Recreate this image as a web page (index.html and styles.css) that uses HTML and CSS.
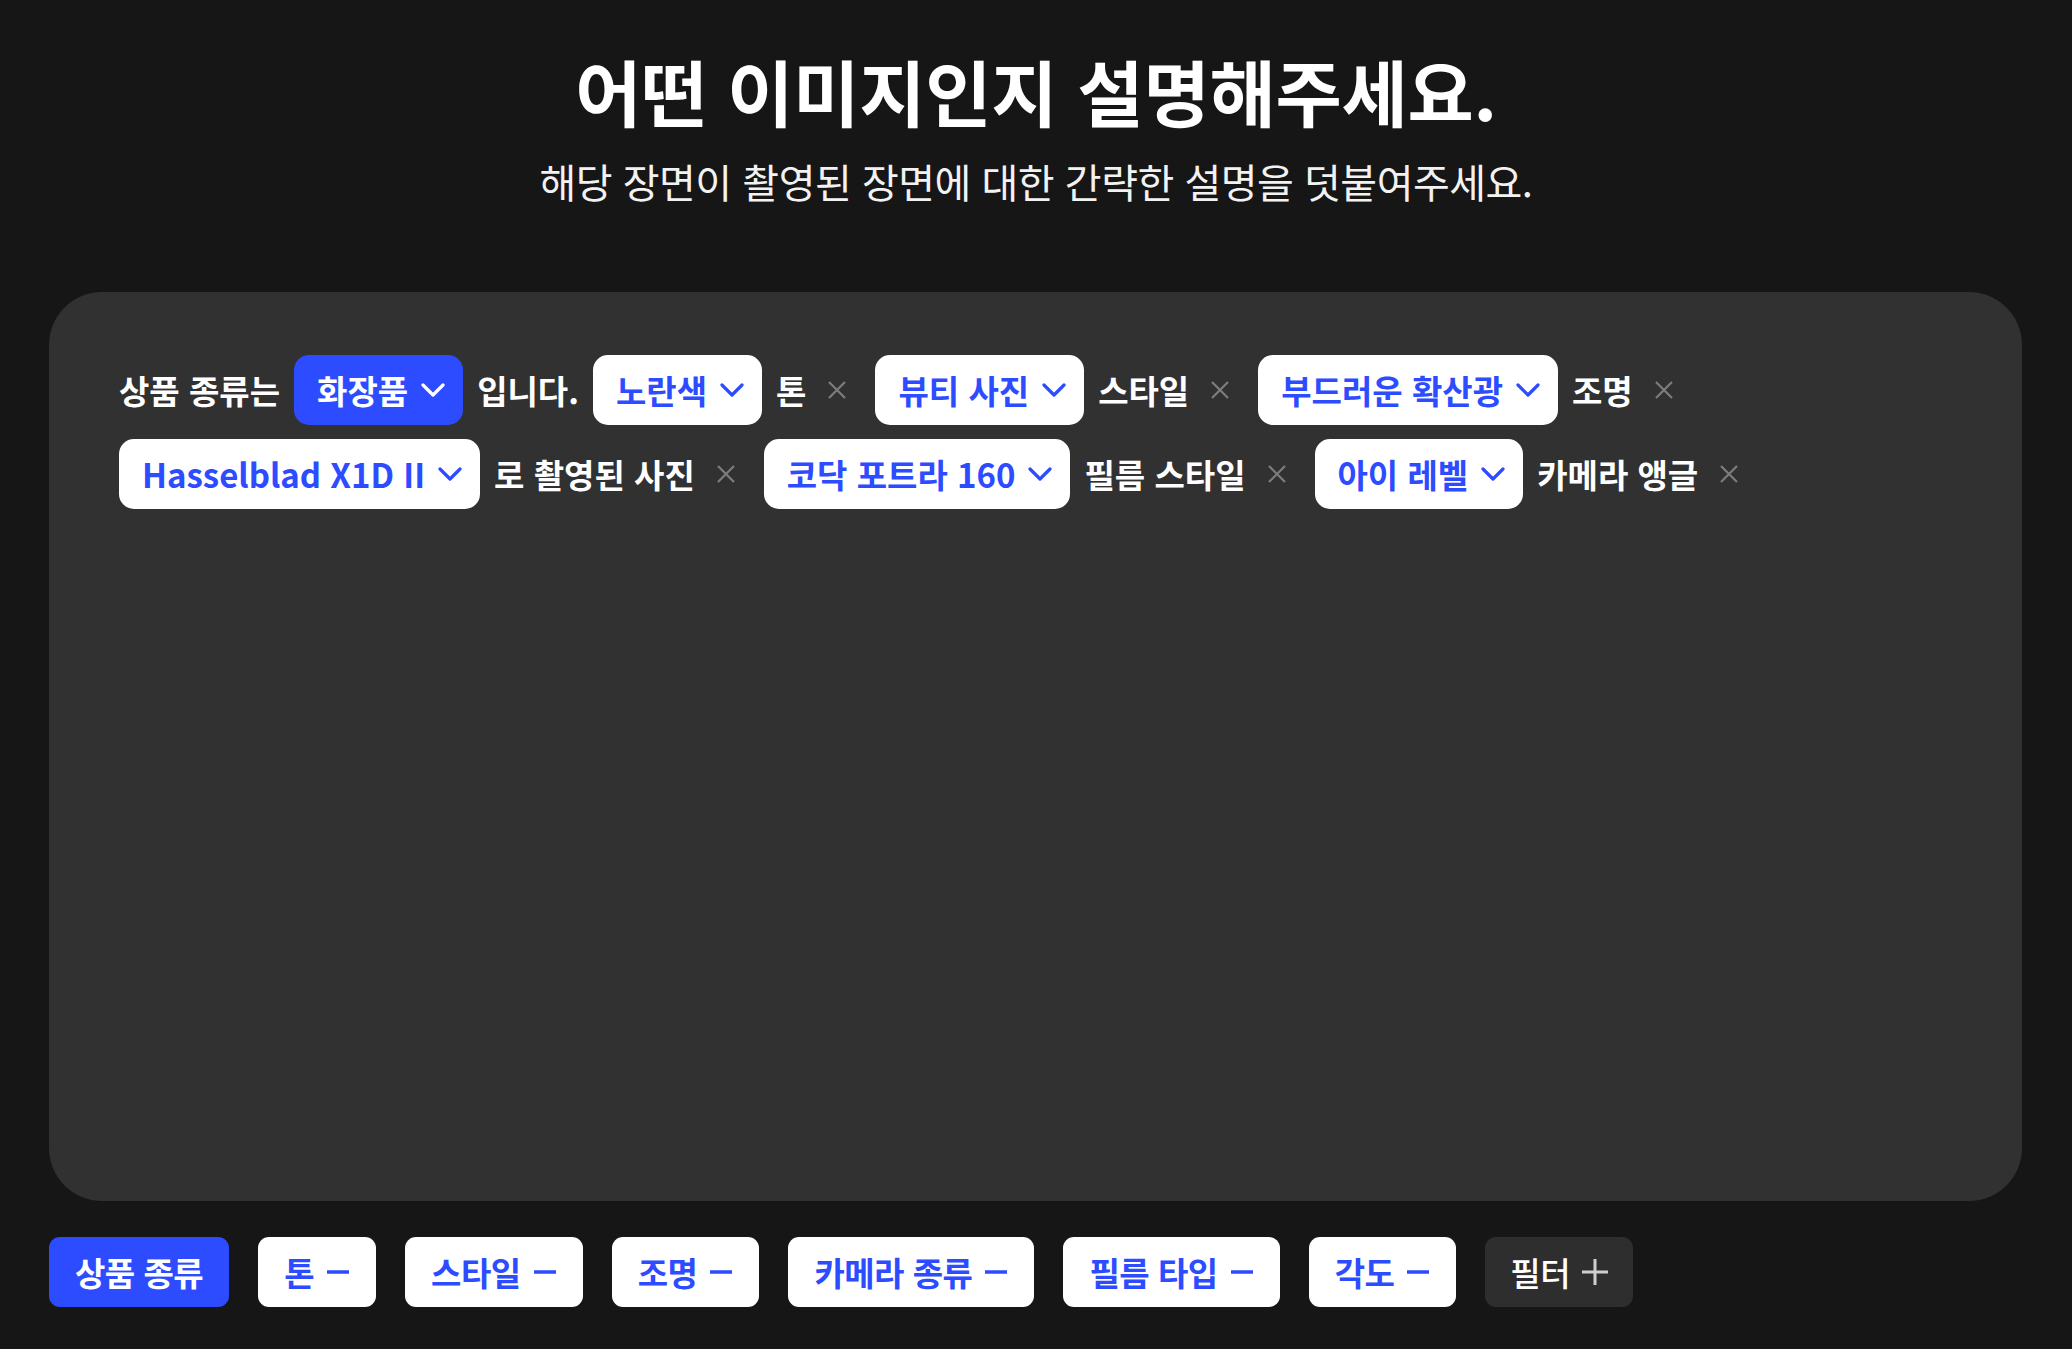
FILE: index.html
```html
<!DOCTYPE html>
<html lang="ko">
<head>
<meta charset="utf-8">
<title>어떤 이미지인지 설명해주세요.</title>
<link rel="stylesheet" href="styles.css">
</head>
<body>
<main class="page">
  <header class="head">
    <h1 class="title">어떤 이미지인지 설명해주세요.</h1>
    <p class="subtitle">해당 장면이 촬영된 장면에 대한 간략한 설명을 덧붙여주세요.</p>
  </header>

  <section class="board">
    <div class="sentence">
      <span class="label">상품 종류는</span>
      <button class="chip chip-active">화장품<svg class="chev" viewBox="0 0 24 14"><path d="M2 2 L12 12 L22 2"/></svg></button>
      <span class="label">입니다.</span>

      <button class="chip">노란색<svg class="chev" viewBox="0 0 24 14"><path d="M2 2 L12 12 L22 2"/></svg></button>
      <span class="label">톤</span>
      <button class="remove" aria-label="삭제"><svg viewBox="0 0 20 20"><path d="M2 2 L18 18 M18 2 L2 18"/></svg></button>

      <button class="chip">뷰티 사진<svg class="chev" viewBox="0 0 24 14"><path d="M2 2 L12 12 L22 2"/></svg></button>
      <span class="label">스타일</span>
      <button class="remove" aria-label="삭제"><svg viewBox="0 0 20 20"><path d="M2 2 L18 18 M18 2 L2 18"/></svg></button>

      <button class="chip">부드러운 확산광<svg class="chev" viewBox="0 0 24 14"><path d="M2 2 L12 12 L22 2"/></svg></button>
      <span class="label">조명</span>
      <button class="remove" aria-label="삭제"><svg viewBox="0 0 20 20"><path d="M2 2 L18 18 M18 2 L2 18"/></svg></button>

      <button class="chip">Hasselblad X1D II<svg class="chev" viewBox="0 0 24 14"><path d="M2 2 L12 12 L22 2"/></svg></button>
      <span class="label">로 촬영된 사진</span>
      <button class="remove" aria-label="삭제"><svg viewBox="0 0 20 20"><path d="M2 2 L18 18 M18 2 L2 18"/></svg></button>

      <button class="chip">코닥 포트라 160<svg class="chev" viewBox="0 0 24 14"><path d="M2 2 L12 12 L22 2"/></svg></button>
      <span class="label">필름 스타일</span>
      <button class="remove" aria-label="삭제"><svg viewBox="0 0 20 20"><path d="M2 2 L18 18 M18 2 L2 18"/></svg></button>

      <button class="chip">아이 레벨<svg class="chev" viewBox="0 0 24 14"><path d="M2 2 L12 12 L22 2"/></svg></button>
      <span class="label">카메라 앵글</span>
      <button class="remove" aria-label="삭제"><svg viewBox="0 0 20 20"><path d="M2 2 L18 18 M18 2 L2 18"/></svg></button>
    </div>
  </section>

  <nav class="filters">
    <button class="filter filter-active">상품 종류</button>
    <button class="filter">톤<svg class="minus" viewBox="0 0 24 24"><path d="M1 12 H23"/></svg></button>
    <button class="filter">스타일<svg class="minus" viewBox="0 0 24 24"><path d="M1 12 H23"/></svg></button>
    <button class="filter">조명<svg class="minus" viewBox="0 0 24 24"><path d="M1 12 H23"/></svg></button>
    <button class="filter">카메라 종류<svg class="minus" viewBox="0 0 24 24"><path d="M1 12 H23"/></svg></button>
    <button class="filter">필름 타입<svg class="minus" viewBox="0 0 24 24"><path d="M1 12 H23"/></svg></button>
    <button class="filter">각도<svg class="minus" viewBox="0 0 24 24"><path d="M1 12 H23"/></svg></button>
    <button class="filter filter-add">필터<svg class="plus" viewBox="0 0 26 26"><path d="M0 13 H26 M13 0 V26"/></svg></button>
  </nav>
</main>
</body>
</html>
```

FILE: styles.css
```css
* {
  box-sizing: border-box;
}

html, body {
  margin: 0;
  padding: 0;
  background: #161616;
}

body {
  font-family: "Noto Sans CJK KR", "Noto Sans", sans-serif;
  color: #ffffff;
}

.page {
  width: 2072px;
  height: 1349px;
  display: flex;
  flex-direction: column;
}

.head {
  display: flex;
  flex-direction: column;
  align-items: center;
  padding-top: 42px;
}

.title {
  margin: 0;
  font-size: 72px;
  font-weight: 700;
  line-height: 96px;
  letter-spacing: -0.2px;
  color: #ffffff;
}

.subtitle {
  margin: 15px 0 0;
  font-size: 40px;
  font-weight: 400;
  line-height: 56px;
  letter-spacing: -0.5px;
  color: #f2f2f2;
}

.board {
  margin: 83px 50px 0 49px;
  height: 909px;
  background: #313131;
  border-radius: 53px;
  padding: 63px 70px;
}

.sentence {
  display: flex;
  flex-wrap: wrap;
  align-items: center;
  column-gap: 14px;
  row-gap: 14px;
  max-width: 1720px;
}

.label {
  font-size: 33px;
  font-weight: 700;
  line-height: 70px;
  color: #ffffff;
  white-space: nowrap;
}

.chip {
  display: inline-flex;
  align-items: center;
  gap: 13px;
  height: 70px;
  padding: 0 18px 0 23px;
  border: none;
  border-radius: 15px;
  background: #ffffff;
  color: #2d4cff;
  font-family: inherit;
  font-size: 33px;
  font-weight: 700;
  white-space: nowrap;
}

.chip-active {
  background: #2d4cff;
  color: #ffffff;
}

.chev {
  width: 24px;
  height: 14px;
  fill: none;
  stroke: currentColor;
  stroke-width: 3.2;
  stroke-linecap: round;
  stroke-linejoin: round;
}

.remove {
  display: inline-flex;
  align-items: center;
  height: 70px;
  padding: 0 14px 0 7px;
  border: none;
  background: transparent;
}

.remove svg {
  width: 20px;
  height: 20px;
  fill: none;
  stroke: #7d7d7d;
  stroke-width: 2.2;
}

.filters {
  display: flex;
  gap: 29px;
  padding: 36px 0 0 49px;
}

.filter {
  display: inline-flex;
  align-items: center;
  gap: 12px;
  height: 70px;
  padding: 0 26px;
  border: none;
  border-radius: 11px;
  background: #ffffff;
  color: #2d4cff;
  font-family: inherit;
  font-size: 33px;
  font-weight: 700;
  letter-spacing: -0.5px;
  white-space: nowrap;
}

.filter-active {
  background: #2d4cff;
  color: #ffffff;
  padding: 0 26px;
}

.filter-add {
  background: #2e2e2e;
  color: #ffffff;
  font-weight: 500;
  padding: 0 25px;
}

.minus {
  width: 24px;
  height: 24px;
  fill: none;
  stroke: currentColor;
  stroke-width: 3.5;
}

.plus {
  width: 26px;
  height: 26px;
  fill: none;
  stroke: #cfcfcf;
  stroke-width: 3;
}
```
